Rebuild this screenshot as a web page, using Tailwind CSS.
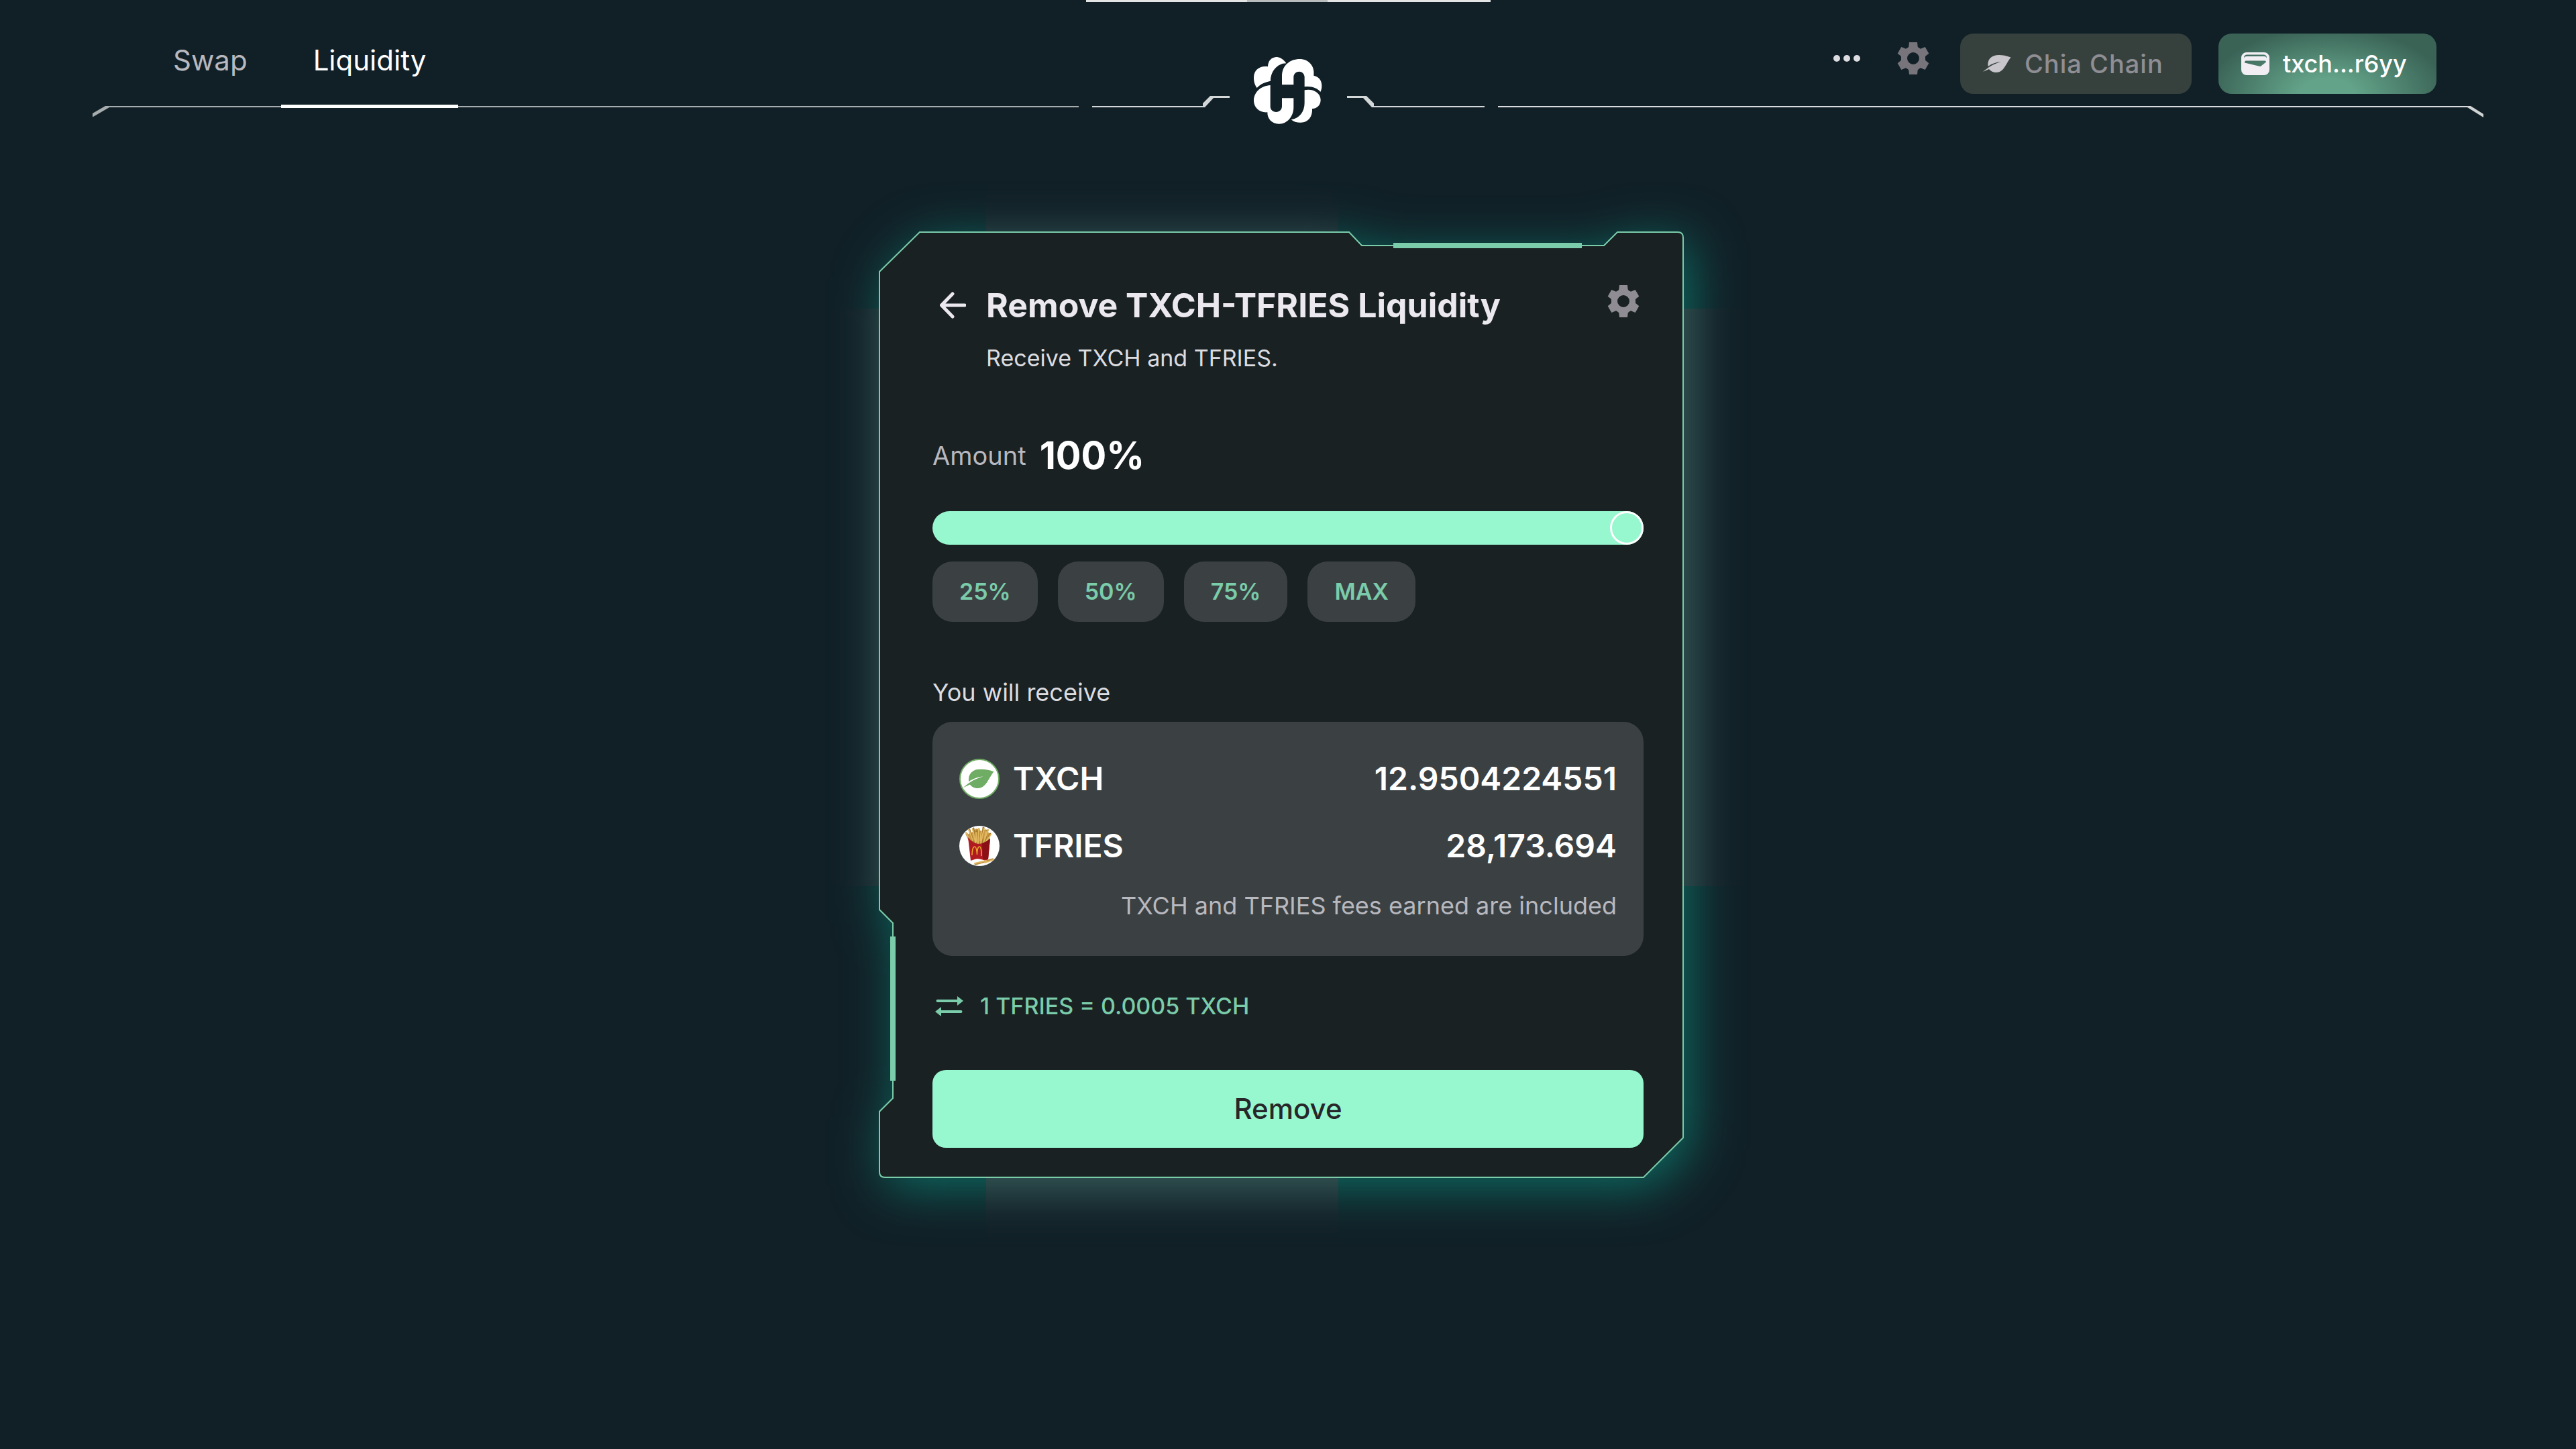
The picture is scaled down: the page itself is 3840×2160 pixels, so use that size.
<!DOCTYPE html>
<html lang="en">
<head>
<meta charset="utf-8">
<title>Remove Liquidity</title>
<script src="https://cdn.jsdelivr.net/npm/@tailwindcss/browser@4"></script>
</head>
<body class="min-h-screen bg-[#112027] font-[Inter,sans-serif] text-[34px] leading-[50px] text-[#dcdce0]">
<svg class="hidden" aria-hidden="true">
  <symbol id="gear" viewBox="-24 -24 48 48"><path fill-rule="evenodd" d="M-6-24H6L6.7-17.6Q7-16.4 11-14.3L17.7-17 23.3-7.3 18.2-3.2Q17.7-2 18.2 3L23.3 7.3 17.7 17 11 14.2Q7 16.4 6.7 17.6L6 24H-6L-6.7 17.6Q-7 16.4-11 14.2L-17.7 17-23.3 7.3-18.2 3Q-17.7 0-18.2-3.2L-23.3-7.3-17.7-17-11-14.3Q-7-16.4-6.7-17.6ZM0-9A9 9 0 1 0 0 9 9 9 0 1 0 0-9Z"/></symbol>
  <symbol id="leaf" viewBox="0 0 42 26"><path d="M41.5 3.5C35 1 29 0 24 0 12 0 6 7 7.5 17 13 13 20 10.5 27 10 16 13 8 18 0 25L9 21C12 24.5 15 26 20 26 31 26 34 13 41.5 3.5Z"/></symbol>
</svg>

<header class="grid px-[138px]">
  <div class="col-start-1 row-start-1 flex justify-center" aria-hidden="true">
    <div class="h-[3px] w-60 bg-[#e3e5e5]"></div><div class="h-[3px] w-[120px] bg-[#b9bcbd]"></div><div class="h-[3px] w-[243px] bg-[#e3e5e5]"></div>
  </div>

  <div class="col-start-1 row-start-1 flex items-start gap-5">
    <div class="flex flex-1 pt-[158px]" aria-hidden="true">
      <svg class="h-4 w-[25px]" viewBox="0 0 25 16" fill="#a7adae"><path d="M0 11 19 0h6v2L1 16H0Z"/></svg>
      <div class="h-[2px] flex-1 bg-[#a7adae]"></div>
    </div>
    <a href="#" aria-label="Home">
      <svg class="h-[190px] w-[585px]" viewBox="0 0 585 190">
        <path fill="#d3d7d8" d="M0 158H165V154L176 143H205V146H181L168 160H0ZM585 158H420V154L409 143H380V146H404L417 160H585Z"/>
        <g fill="#fff" transform="translate(241 85) scale(.3333)">
          <path d="M145 28C130 6 114 0 100 0 80 2 64 15 63 43 30 38 0 55 0 92 0 112 5 125 14 138 30 120 52 112 75 107 75 65 105 28 145 28Z"/>
          <path d="M126 124V85C126 35 165 9 205 9 245 9 274 40 268 83 295 88 305 110 304 130 304 140 302 148 298 156 285 138 255 128 227 133V90C227 75 215 65 203 65 190 65 178 75 178 90V124Z"/>
          <path d="M74 126V222C74 238 88 246 100 246 115 246 126 235 126 220V184H178V225C178 265 150 300 112 299 80 299 60 275 61 247 25 250 0 225 0 195 0 155 35 128 74 126Z"/>
          <path d="M227 148C265 140 299 160 299 192 299 215 282 232 261 231 263 265 245 294 208 293 192 293 178 290 167 280 205 275 227 245 227 205Z"/>
        </g>
      </svg>
    </a>
    <div class="flex flex-1 pt-[158px]" aria-hidden="true">
      <div class="h-[2px] flex-1 bg-[#d9dcdd]"></div>
      <svg class="h-[18px] w-[25px]" viewBox="0 0 25 18" fill="#d0d4d5"><path d="M0 0H6L25 12V17L1 2H0Z"/></svg>
    </div>
  </div>

  <div class="col-start-1 row-start-1 flex items-start justify-between px-[70px]">
    <nav class="flex text-[42px]">
      <a href="#" class="px-[50px] pt-[65px] text-[#b8b8bf]">Swap</a>
      <a href="#" class="border-b-5 border-white px-[48px] pt-[65px] pb-[41px] text-white">Liquidity</a>
    </nav>
    <div class="flex items-start pt-[50px] font-medium">
      <button type="button" aria-label="More" class="mt-8 mr-[55px]"><svg class="h-[10px] w-10" viewBox="0 0 40 10" fill="#dcdce1"><circle cx="5" cy="5" r="5"/><circle cx="20" cy="5" r="5"/><circle cx="35" cy="5" r="5"/></svg></button>
      <button type="button" aria-label="Settings" class="mt-[13px] mr-[46px]"><svg class="size-12" fill="#77757b"><use href="#gear"/></svg></button>
      <button type="button" class="mr-10 flex h-[90px] w-[345px] items-center gap-5 rounded-[20px] bg-[#36413d] pl-[34px] text-[38px] tracking-[1px] text-[#8f8e94]">
        <svg class="h-[26px] w-[42px]" fill="#c8c5cb"><use href="#leaf"/></svg>Chia Chain
      </button>
      <button type="button" class="flex h-[90px] w-[325px] items-center gap-5 rounded-[20px] bg-[radial-gradient(ellipse_at_50%_100%,#63a389_18%,#3a6356_78%)] pl-[34px] text-[36px] text-white">
        <svg class="h-[34px] w-[42px]" viewBox="0 0 42 34" fill="#f1eef4"><path fill-rule="evenodd" d="M8 0H34A8 8 0 0 1 42 8V26A8 8 0 0 1 34 34H8A8 8 0 0 1 0 26V8A8 8 0 0 1 8 0ZM4 9.500Q4 6 8 6H34Q38 6 38 9.500V8Q38 3.500 33 3.500H9Q4 3.500 4 8ZM7 12.500Q5 12.500 5 15.500L28 21Q29 21 30 20L37 14.500Q37 12.500 35 12.500Z"/></svg>txch...r6yy
      </button>
    </div>
  </div>
</header>

<main class="flex justify-center pt-[155px] pr-5">
  <section class="relative w-[1200px] pt-20 pr-[60px] pb-[45px] pl-20">
    <svg class="absolute inset-0 size-full overflow-visible" viewBox="0 0 1200 1411" preserveAspectRatio="none" aria-hidden="true">
      <defs>
        <path id="panel" d="M1 60 61 1H701L720 21H1081L1101 1H1191Q1199 1 1199 9V1351L1140 1410H9Q1 1410 1 1402V1312L21 1292V1031L1 1011Z"/>
        <filter id="glow" filterUnits="userSpaceOnUse" x="-150" y="-150" width="1500" height="1711" color-interpolation-filters="sRGB"><feGaussianBlur stdDeviation="38"/></filter>
        <clipPath id="corners"><path d="M-150-150H160V115H-150ZM685-150H1350V115H685ZM-150 976H160V1561H-150ZM685 976H1350V1561H685Z"/></clipPath>
        <clipPath id="cross"><path d="M160-150H685V115H1350V976H685V1561H160V976H-150V115H160Z"/></clipPath>
      </defs>
      <g clip-path="url(#corners)"><use href="#panel" x="10" y="14" fill="#0d6e64" filter="url(#glow)"/></g>
      <g clip-path="url(#cross)"><use href="#panel" x="10" y="14" fill="#3e6663" filter="url(#glow)"/></g>
      <use href="#panel" fill="#192122" stroke="#7accaa" stroke-width="2"/>
      <path fill="#7accaa" d="M767 17H1048V25H767ZM17 1051H25V1266H17Z"/>
    </svg>

    <div class="relative flex flex-col">
      <div class="flex items-start">
        <a href="#" aria-label="Back" class="mt-[10px] ml-[10px] w-[70px]">
          <svg class="size-10" viewBox="0 0 40 40" fill="none" stroke="#ebe9ef" stroke-width="5" stroke-linecap="round" stroke-linejoin="round"><path d="M38 20H4M20 3 3.500 20 20 37"/></svg>
        </a>
        <div class="flex-1">
          <h1 class="text-[50px] leading-[60px] font-bold text-[#ebe9ef]">Remove TXCH-TFRIES Liquidity</h1>
          <p class="mt-6">Receive TXCH and TFRIES.</p>
        </div>
        <button type="button" aria-label="Transaction settings" class="mr-[6px]"><svg class="size-12" fill="#8f8d93"><use href="#gear"/></svg></button>
      </div>

      <div class="mt-20 flex items-center gap-5">
        <label for="amount" class="text-[38px] text-[#b8b8bf]">Amount</label>
        <output for="amount" class="text-[56px] leading-[80px] font-bold text-white">100%</output>
      </div>
      <input id="amount" type="range" min="0" max="100" value="100" class="mt-[43px] h-[50px] w-full appearance-none rounded-full bg-[#97f7cf] [&::-webkit-slider-thumb]:size-[50px] [&::-webkit-slider-thumb]:appearance-none [&::-webkit-slider-thumb]:rounded-full [&::-webkit-slider-thumb]:border-3 [&::-webkit-slider-thumb]:border-white [&::-webkit-slider-thumb]:bg-[#97f7cf]">
      <div class="mt-[25px] flex gap-[30px] font-semibold text-[#7accaa]">
        <button type="button" class="h-[90px] rounded-[30px] bg-[#3b4143] px-10">25%</button>
        <button type="button" class="h-[90px] rounded-[30px] bg-[#3b4143] px-10">50%</button>
        <button type="button" class="h-[90px] rounded-[30px] bg-[#3b4143] px-10">75%</button>
        <button type="button" class="h-[90px] rounded-[30px] bg-[#3b4143] px-10">MAX</button>
      </div>

      <h2 class="mt-20 text-[36px]">You will receive</h2>
      <div class="mt-[19px] rounded-[30px] bg-[#3b4143] px-10 pt-[55px] pb-[50px]">
        <dl class="flex flex-col gap-10 text-[48px] leading-[60px] font-semibold text-white">
          <div class="flex justify-between">
            <dt class="flex gap-5">
              <svg class="size-[60px]" viewBox="0 0 60 60"><circle cx="30" cy="30" r="29" fill="#fff" stroke="#6fac64" stroke-width="2"/><use href="#leaf" x="6" y="15.500" width="46" height="28.500" fill="#6fac64"/></svg>TXCH
            </dt>
            <dd>12.9504224551</dd>
          </div>
          <div class="flex justify-between">
            <dt class="flex gap-5">
              <svg class="size-[60px] rounded-full" viewBox="0 0 60 60">
                <rect width="60" height="60" fill="#fff"/>
                <path fill="#c99a48" d="M14 20 12 13 20 9 25 4 33 8 40 5 45 12 44 22 36 29H24Z"/>
                <g stroke-linecap="round" fill="none">
                  <path stroke="#a87a2c" stroke-width="3" d="M17 25 11 12M21 25 15 6M25 26 21 4M29 27 29 5M33 27 36 3M37 26 42 7M41 24 46 12M23 26 26 8M35 26 33 9"/>
                  <path stroke="#e3b85f" stroke-width="2" d="M16 22 10 10M20 22 14 5M24 25 20 5M28 26 29 4M32 26 37 4M36 25 43 6M40 23 47 13M25 24 25 10M31 22 33 8M38 18 40 9"/>
                </g>
                <path fill="#b01a20" d="M13 17Q20 26 28 27 38 27 46 19L43 50 39 52Q28 48 23 50L17 52Z"/>
                <path fill="#8a1016" d="M34 26Q41 24 46 19L43 50 35 50Z"/>
                <path fill="none" stroke="#e8a52c" stroke-width="1.500" d="M19 44C19 35 21 31 23 31 25 31 26 36 26.500 43 26.500 36 28 31 30 31 32 31 33.500 37 33 45"/>
                <g stroke-linecap="round"><path stroke="#b98b3a" stroke-width="3" d="M24 57 50 50"/><path stroke="#e3b968" stroke-width="2" d="M23 56 40 52M38 55 50 51"/></g>
              </svg>TFRIES
            </dt>
            <dd>28,173.694</dd>
          </div>
        </dl>
        <p class="mt-[34px] text-right text-[36px] text-[#b8b8bf]">TXCH and TFRIES fees earned are included</p>
      </div>

      <button type="button" class="mt-[50px] flex items-center gap-[25px] self-start pl-1 font-medium text-[#7accaa]">
        <svg class="h-[30px] w-[42px]" viewBox="0 0 42 30" fill="#7accaa"><path d="M3.500 5H33V0L42 7 33 14V9H3.500A2 2 0 0 1 3.500 5ZM38.500 21H9V16L0 23 9 30V25H38.500A2 2 0 0 0 38.500 21Z"/></svg>1 TFRIES = 0.0005 TXCH
      </button>
      <button type="button" class="mt-[70px] h-[116px] rounded-[20px] bg-[#97f7cf] text-[42px] font-medium text-[#27272a]">Remove</button>
    </div>
  </section>
</main>
</body>
</html>
